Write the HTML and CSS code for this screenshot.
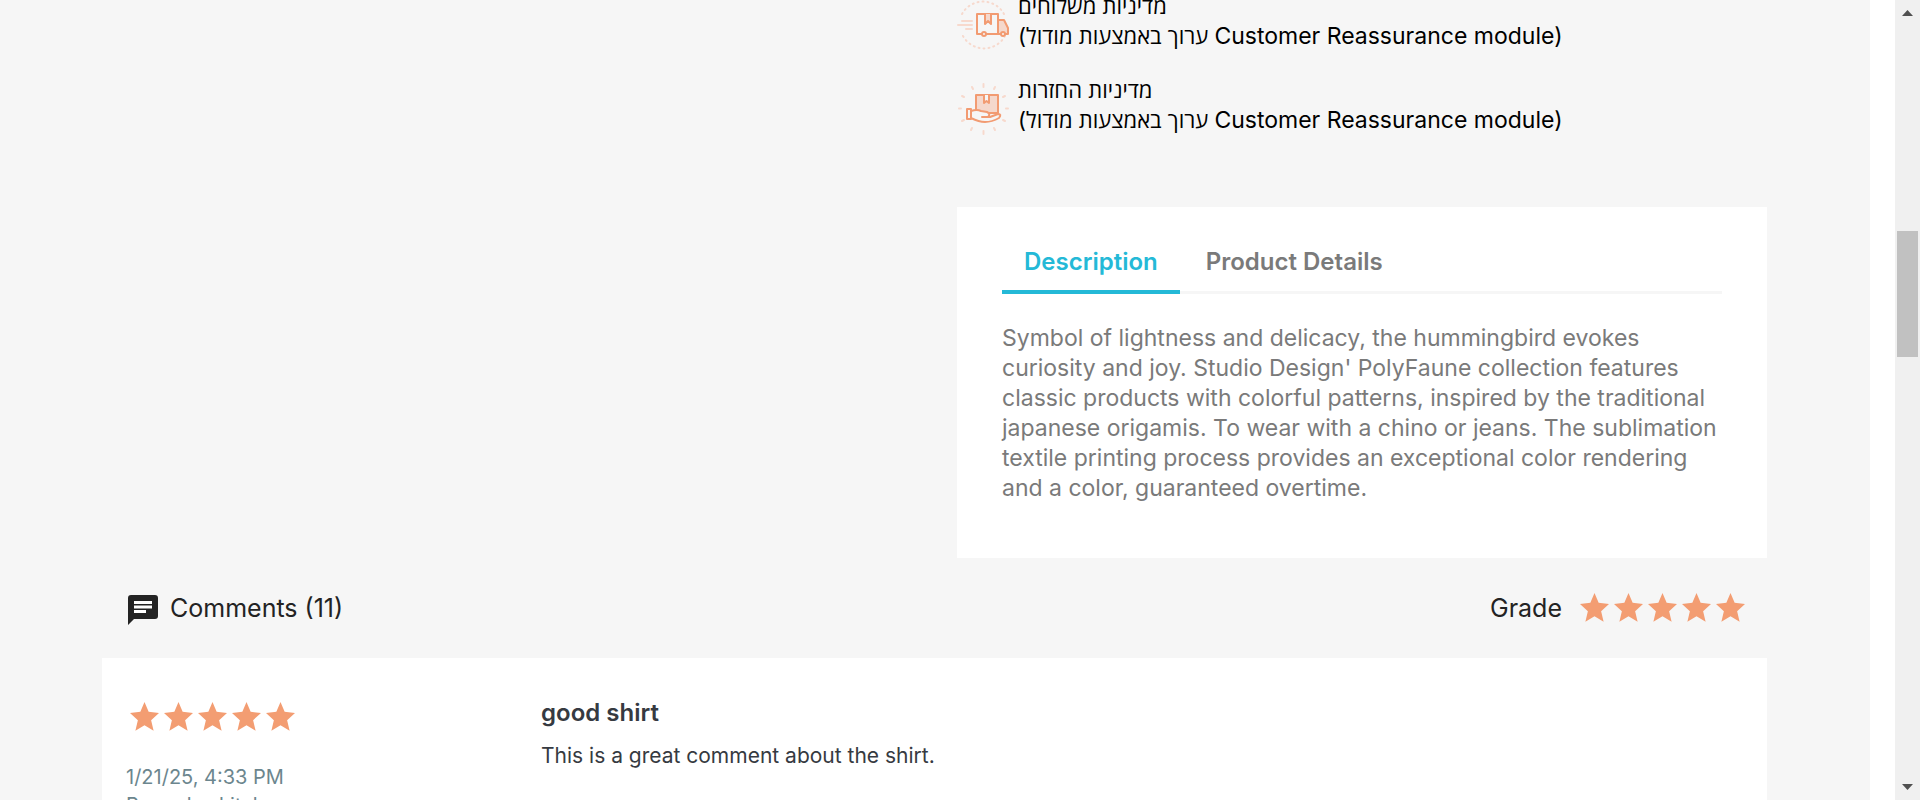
FILE: index.html
```
<!DOCTYPE html>
<html lang="en">
<head>
<meta charset="utf-8">
<title>Hummingbird printed t-shirt</title>
<link rel="stylesheet" href="styles.css">
</head>
<body>
<svg class="defs" aria-hidden="true">
  <symbol id="star" viewBox="1 1 28 28">
    <path d="M15 1l4 9.500 10 1-7.600 7 2.400 10.300-8.800-5.400-8.800 5.400 2.400-10.300-7.600-7 10-1z"/>
  </symbol>
</svg>
<div class="window">
  <main class="page">
    <div class="container">
      <div class="product">
        <ul class="reassurance">
          <li>
            <svg class="policy-icon" viewBox="2 -5 56 56" aria-hidden="true">
              <path class="faint dotted" d="M7 14a24 24 0 0 1 43 2M50 36a24 24 0 0 1-43-2"/>
              <path class="faint" d="M7 21h10M3 25h14M11 29h6"/>
              <path class="line tint" d="M43 20h6l4 8v6h-10z"/>
              <path class="line paper" d="M22 14h21v20H22z"/>
              <path class="line tint" d="M30 14v10l3-3 3 3V14"/>
              <circle class="line paper" cx="29" cy="34" r="2"/>
              <circle class="line paper" cx="48" cy="34" r="2"/>
            </svg>
            <p><span>מדיניות משלוחים</span><br><span>(ערוך באמצעות מודול <span class="latin">Customer Reassurance module)</span></span></p>
          </li>
          <li>
            <svg class="policy-icon" viewBox="2 -1 56 56" aria-hidden="true">
              <path class="faint" d="M28.500 4v3M28.500 51v3M4 28.500h2M51 28.500h2M17 7l1 2M39 9l1-2M7 16l2 1M48 17l2-1M7 41l2-1M48 40l2 1M16 50l1-2M39 48l1 2"/>
              <path class="line tint" d="M21 15h22v18H21z"/>
              <path class="line paper" d="M29 15v8l2.500-2 2.500 2v-8"/>
              <path class="line paper" d="M16 31q6-2 10 0l6 1q4 2 1 5h-6 8l8-3q4 0 1 4-7 4-14 4-6 0-14-4z"/>
              <path class="line paper" d="M12 29h4v10h-4z"/>
            </svg>
            <p><span>מדיניות החזרות</span><br><span>(ערוך באמצעות מודול <span class="latin">Customer Reassurance module)</span></span></p>
          </li>
        </ul>
        <section class="tabs">
          <div class="tab-list" role="tablist">
            <button class="tab active" role="tab" aria-selected="true">Description</button>
            <button class="tab" role="tab" aria-selected="false">Product Details</button>
          </div>
          <p class="description">Symbol of lightness and delicacy, the hummingbird evokes<br>curiosity and joy. Studio Design' PolyFaune collection features<br>classic products with colorful patterns, inspired by the traditional<br>japanese origamis. To wear with a chino or jeans. The sublimation<br>textile printing process provides an exceptional color rendering<br>and a color, guaranteed overtime.</p>
        </section>
      </div>
      <header class="comments-header">
        <div class="comments-title">
          <svg class="comment-icon" viewBox="0 0 30 30" aria-hidden="true">
            <path d="M3 0h24q3 0 3 3v18q0 3-3 3H6l-6 6V3q0-3 3-3z"/>
            <path class="comment-lines" d="M6 7.500h18M6 12h18M6 16.500h12"/>
          </svg>
          <span>Comments (11)</span>
        </div>
        <div class="grade">
          <span>Grade</span>
          <div class="stars" role="img" aria-label="5 out of 5"><svg><use href="#star"/></svg><svg><use href="#star"/></svg><svg><use href="#star"/></svg><svg><use href="#star"/></svg><svg><use href="#star"/></svg></div>
        </div>
      </header>
      <article class="comment">
        <div class="comment-info">
          <div class="stars" role="img" aria-label="5 out of 5"><svg><use href="#star"/></svg><svg><use href="#star"/></svg><svg><use href="#star"/></svg><svg><use href="#star"/></svg><svg><use href="#star"/></svg></div>
          <p class="meta">1/21/25, 4:33 PM<br>By roel sakital</p>
        </div>
        <div class="comment-body">
          <h4>good shirt</h4>
          <p>This is a great comment about the shirt.</p>
        </div>
      </article>
    </div>
  </main>
  <div class="scrollbar" aria-hidden="true">
    <svg viewBox="0 0 11 6"><path d="M0 6h11L5.500 0z"/></svg>
    <div class="track"><div class="thumb"></div></div>
    <svg viewBox="0 0 11 6"><path d="M0 0h11L5.500 6z"/></svg>
  </div>
</div>
</body>
</html>
```
FILE: styles.css
```
* { box-sizing: border-box; }
body {
  margin: 0;
  background: #fff;
  font-family: Inter, "Open Sans", "Liberation Sans", "DejaVu Sans", sans-serif;
  color: #232323;
  overflow: hidden;
}
p, h4, ul { margin: 0; padding: 0; }
.defs { display: none; }
.window { display: flex; height: 100vh; overflow: hidden; }
.page { flex: 1; margin-right: 25px; background: #f6f6f6; overflow: hidden; }
.container { padding: 0 103px 0 102px; }
.product { width: 810px; max-width: 100%; margin-left: auto; }
.reassurance { list-style: none; color: #000; font-size: 22px; line-height: 30px; }
.reassurance li { display: flex; gap: 5px; height: 84px; align-items: flex-start; }
.reassurance li:first-child { margin-top: -9px; }
.latin { font-size: 23px; }
.policy-icon { width: 56px; height: 56px; flex: none; margin: 4px 0 0; }
.faint { fill: none; stroke: #f7d9cd; stroke-width: 2; stroke-linecap: round; }
.dotted { stroke-dasharray: 1 4; }
.line { stroke: #f29b72; stroke-width: 2; stroke-linejoin: round; }
.tint { fill: #f5d8cc; }
.paper { fill: #f6f6f6; }
.tabs { margin-top: 48px; padding: 33px 45px 55px; background: #fff; }
.tab-list { display: flex; gap: 4px; border-bottom: 3px solid #f6f6f6; }
.tab {
  margin-bottom: -3px;
  padding: 6px 22px 12px;
  border: 0;
  border-bottom: 4px solid transparent;
  background: none;
  font: 600 24px/32px Inter, "Open Sans", sans-serif;
  color: #7a7a7a;
  white-space: nowrap;
}
.tab.active { color: #24b9d7; border-color: #24b9d7; }
.description { margin-top: 29px; color: #7a7a7a; font-size: 23px; line-height: 30px; white-space: nowrap; }
.comments-header { display: flex; justify-content: space-between; align-items: center; height: 100px; padding: 0 22px 0 26px; font-size: 25px; }
.comments-title { display: flex; align-items: center; gap: 12px; }
.comment-icon { width: 30px; height: 30px; margin-top: 4px; fill: #232323; }
.comment-lines { stroke: #fff; stroke-width: 3; }
.grade { display: flex; align-items: center; gap: 18px; }
.stars { display: flex; gap: 5px; padding-bottom: 2px; }
.stars svg { width: 29px; height: 29px; fill: #f39d72; }
.comment { display: flex; padding: 40px 24px 0; background: #fff; min-height: 200px; }
.comment-info { width: 415px; padding-top: 4px; }
.comment-info .stars { margin-left: 4px; }
.meta { margin-top: 30px; color: #6c868e; font-size: 20px; line-height: 28px; }
.comment-body { color: #363a41; }
.comment-body h4 { font-weight: 600; font-size: 24px; line-height: 30px; }
.comment-body p { margin-top: 14px; font-size: 21px; line-height: 28px; }
.scrollbar { display: flex; flex-direction: column; align-items: center; width: 25px; padding: 10px 2px; background: #f0f0f0; }
.scrollbar svg { width: 11px; height: 6px; fill: #505050; }
.track { flex: 1; align-self: stretch; padding-top: 215px; }
.thumb { height: 126px; background: #c1c1c1; }
```
